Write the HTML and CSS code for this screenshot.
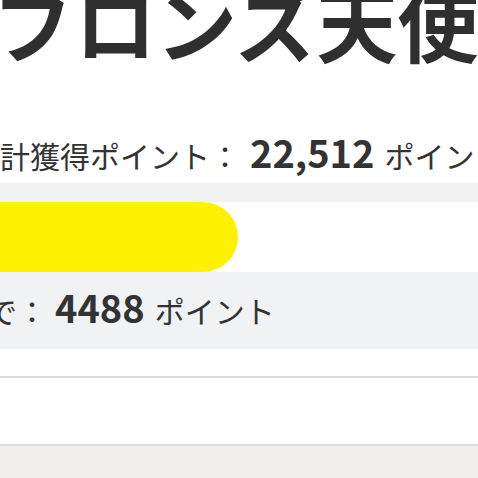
FILE: index.html
```html
<!DOCTYPE html>
<html lang="ja">
<head>
<meta charset="utf-8">
<title>ランク</title>
<link rel="stylesheet" href="styles.css">
</head>
<body>
<main class="page">
  <h1 class="rank">ブロンズ天使</h1>
  <p class="total">累計獲得ポイント：<strong class="num">22,512</strong>ポイント</p>
  <section class="progress-box">
    <div class="track"><div class="bar" style="width: 238px"></div></div>
    <p class="next">次のランクまで：<strong class="num">4488</strong>ポイント</p>
  </section>
  <div class="gap"></div>
  <div class="band"></div>
  <footer class="footer"></footer>
</main>
</body>
</html>
```
FILE: styles.css
```css
html, body {
  margin: 0;
  padding: 0;
  background: #fff;
}
body {
  width: 478px;
  height: 478px;
  overflow: hidden;
  font-family: "Noto Sans CJK JP", "Noto Sans", sans-serif;
  color: #333;
}
.page {
  display: flex;
  flex-direction: column;
}
.rank {
  margin: -20px 0 0 -6px;
  font-size: 81px;
  font-weight: 700;
  line-height: 81px;
  height: 145px;
  white-space: nowrap;
  color: #2f2f2f;
}
.total {
  margin: 0 0 0 -30px;
  height: 58px;
  font-size: 30px;
  line-height: 60px;
  white-space: nowrap;
}
.num {
  font-size: 38px;
  font-weight: 700;
  line-height: 1;
  margin: 0 10px 0 10px;
}
.next .num {
  margin: 0 10px 0 8px;
}
.progress-box {
  background: #f0f2f4;
  padding-top: 19px;
  height: 166px;
  box-sizing: border-box;
}
.track {
  background: #fff;
  height: 70px;
  display: flex;
}
.bar {
  background: #fff200;
  height: 100%;
  border-radius: 0 35px 35px 0;
}
.next {
  margin: 0 0 0 -193px;
  height: 77px;
  font-size: 30px;
  line-height: 77px;
  white-space: nowrap;
}
.gap {
  height: 27px;
}
.band {
  height: 66px;
  border-top: 2px solid #dcdcdc;
  border-bottom: 2px solid #dcdcdc;
}
.footer {
  background: #f1f0ee;
  height: 40px;
}
```
